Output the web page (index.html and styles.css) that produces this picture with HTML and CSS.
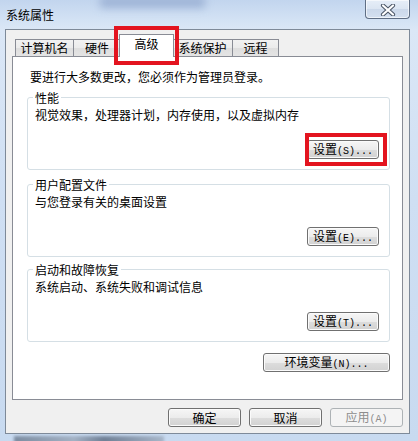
FILE: index.html
```html
<!DOCTYPE html>
<html lang="zh-CN">
<head>
<meta charset="utf-8">
<title>系统属性</title>
<link rel="stylesheet" href="styles.css">
</head>
<body>
<div class="window">
  <div class="glass-blur"></div>
  <div class="glass-blur-bottom"></div>
  <div class="titlebar">
    <span class="title">系统属性</span>
    <div class="close">
      <svg width="16" height="12" viewBox="0 0 16 12">
        <path d="M3 1.5 L13 10.5 M13 1.5 L3 10.5" stroke="#4a5566" stroke-width="4.2" stroke-linecap="round"/>
        <path d="M3 1.5 L13 10.5 M13 1.5 L3 10.5" stroke="#ffffff" stroke-width="2.2" stroke-linecap="round"/>
      </svg>
    </div>
  </div>
  <div class="client">
    <div class="tabs">
      <div class="tab w1">计算机名</div>
      <div class="tab w2">硬件</div>
      <div class="tab w3 active">高级</div>
      <div class="tab w4">系统保护</div>
      <div class="tab w5">远程</div>
    </div>
    <div class="panel">
      <p class="note">要进行大多数更改，您必须作为管理员登录。</p>
      <div class="group g1">
        <div class="group-title">性能</div>
        <div class="group-desc">视觉效果，处理器计划，内存使用，以及虚拟内存</div>
        <div class="group-actions"><button class="btn btn-set">设置<span class="acc">(S)...</span></button></div>
      </div>
      <div class="group g2">
        <div class="group-title">用户配置文件</div>
        <div class="group-desc">与您登录有关的桌面设置</div>
        <div class="group-actions"><button class="btn btn-set">设置<span class="acc">(E)...</span></button></div>
      </div>
      <div class="group g3">
        <div class="group-title">启动和故障恢复</div>
        <div class="group-desc">系统启动、系统失败和调试信息</div>
        <div class="group-actions"><button class="btn btn-set">设置<span class="acc">(T)...</span></button></div>
      </div>
      <div class="env-row"><button class="btn btn-env">环境变量<span class="acc">(N)...</span></button></div>
    </div>
    <div class="dialog-buttons">
      <button class="btn btn-dlg">确定</button>
      <button class="btn btn-dlg">取消</button>
      <button class="btn btn-dlg" disabled>应用<span class="acc">(A)</span></button>
    </div>
  </div>
  <div class="highlight hl-tab"></div>
  <div class="highlight hl-btn"></div>
</div>
</body>
</html>
```
FILE: styles.css
```css
* { box-sizing: border-box; }
html, body { margin: 0; padding: 0; }
body {
  width: 418px;
  height: 441px;
  overflow: hidden;
  font-family: "Noto Sans CJK SC", "Noto Sans", sans-serif;
  font-size: 12px;
  color: #000;
}
.window {
  position: relative;
  width: 418px;
  height: 441px;
  background: linear-gradient(180deg, #c2d5ee 0px, #d3e2f4 20px, #dbe7f6 30px, #cfdff3 200px, #c8daf0 441px);
  overflow: hidden;
}
.glass-blur {
  position: absolute;
  left: 100px;
  top: -4px;
  width: 105px;
  height: 12px;
  background: #8ea5cc;
  filter: blur(4px);
  opacity: 0.7;
}
.glass-blur-bottom {
  position: absolute;
  left: 14px;
  top: 436px;
  width: 150px;
  height: 8px;
  background: linear-gradient(90deg, #6a7a8e, #9aa8ba 40%, #5a6a80 60%, #a0aec0);
  filter: blur(1.5px);
  opacity: 0.8;
}
.titlebar {
  height: 29px;
  display: flex;
  justify-content: space-between;
  align-items: flex-start;
  padding: 0 8px 0 6px;
  position: relative;
}
.title {
  margin-top: 7px;
  line-height: 16px;
  color: #000;
}
.close {
  width: 45px;
  height: 19px;
  border: 1px solid #5f6e84;
  border-top: none;
  border-radius: 0 0 4px 4px;
  background: linear-gradient(180deg, #e6eef8 0%, #dbe5f2 50%, #cbd8ea 51%, #d4e0f0 100%);
  box-shadow: inset 0 0 0 1px rgba(255,255,255,0.6);
  display: flex;
  align-items: center;
  justify-content: center;
  padding-top: 1px;
}
.client {
  margin-left: 5px;
  width: 405px;
  height: 405px;
  border: 1px solid #7e8a99;
  background: #f0f0f0;
  display: flex;
  flex-direction: column;
  position: relative;
}
.tabs {
  height: 26px;
  margin: 0 6px;
  padding-left: 3px;
  display: flex;
  align-items: flex-end;
}
.tab {
  height: 17px;
  border: 1px solid #898c95;
  border-bottom: none;
  background: linear-gradient(180deg, #f2f2f2 0%, #ebebeb 50%, #dedede 51%, #e4e4e4 100%);
  text-align: center;
  line-height: 15px;
  white-space: nowrap;
}
.tab + .tab { margin-left: -1px; }
.w1 { width: 59px; }
.w2 { width: 48px; }
.w3 { width: 51px; }
.w4 { width: 61px; }
.w5 { width: 47px; }
.tab.active {
  width: 55px;
  height: 23px;
  margin: 0 -2px -1px -2px;
  background: #fff;
  position: relative;
  z-index: 2;
  line-height: 18px;
}
.tab.active + .tab { margin-left: 0; }
.panel {
  margin: 0 6px;
  height: 344px;
  border: 1px solid #898c95;
  background: #fff;
  padding: 0 12px 0 14px;
  position: relative;
  z-index: 1;
}
.note {
  margin: 12px 0 0 0;
  padding-left: 3px;
  line-height: 16px;
}
.group {
  border: 1px solid #d5dfe5;
  border-radius: 3px;
  padding: 0 10px 10px 0;
}
.g1 { margin-top: 12px; }
.g2 { margin-top: 14px; }
.g3 { margin-top: 12px; }
.group-title {
  width: fit-content;
  margin: -8px 0 0 5px;
  padding: 0 2px;
  line-height: 16px;
  background: #fff;
}
.group-desc {
  margin-top: 1px;
  padding-left: 7px;
  line-height: 16px;
}
.group-actions {
  margin-top: 17px;
  display: flex;
  justify-content: flex-end;
}
.btn {
  appearance: none;
  -webkit-appearance: none;
  margin: 0;
  padding: 0;
  height: 19px;
  border: 1px solid #707070;
  border-radius: 3px;
  background: linear-gradient(180deg, #f6f6f6 0%, #ececec 50%, #dddddd 51%, #d2d2d2 100%);
  box-shadow: inset 0 0 0 1px #fbfbfb;
  font-family: "Noto Sans CJK SC", "Noto Sans", sans-serif;
  font-size: 12px;
  line-height: 16px;
  color: #000;
  text-align: center;
  white-space: nowrap;
}
.acc {
  font-family: "Liberation Mono", "DejaVu Sans Mono", monospace;
  font-size: 10px;
  letter-spacing: 0;
}
.btn-set { width: 72px; }
.env-row {
  margin-top: 11px;
  display: flex;
  justify-content: flex-end;
}
.btn-env { width: 127px; }
.dialog-buttons {
  margin-top: 8px;
  padding-right: 6px;
  display: flex;
  justify-content: flex-end;
  gap: 8px;
}
.btn-dlg { width: 73px; }
.btn-dlg:disabled {
  border-color: #adb2b5;
  background: #f4f4f4;
  box-shadow: none;
  color: #8d8d8d;
}
.highlight {
  position: absolute;
  border: 4px solid #e3141f;
  z-index: 5;
}
.hl-tab { left: 114px; top: 26px; width: 65px; height: 39px; }
.hl-btn { left: 305px; top: 133px; width: 82px; height: 33px; }
```
